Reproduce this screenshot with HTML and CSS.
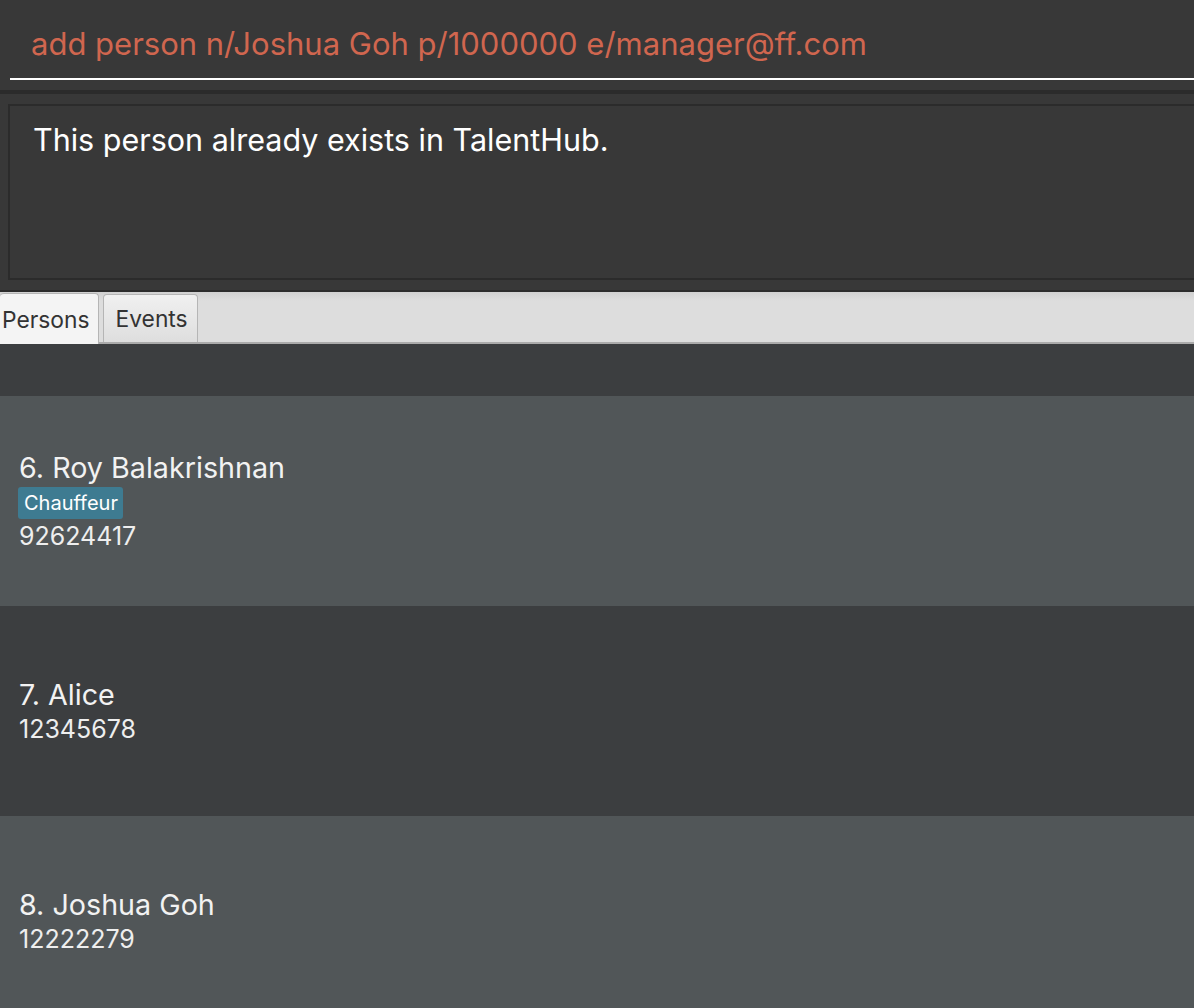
FILE: index.html
```html
<!DOCTYPE html>
<html>
<head>
<meta charset="utf-8">
<link rel="stylesheet" href="styles.css">
</head>
<body>
<div class="app">
  <div class="command-box">
    <div class="command-input">add person n/Joshua Goh p/1000000 e/manager@ff.com</div>
  </div>
  <div class="divider"></div>
  <div class="result-wrap">
    <div class="result-box">This person already exists in TalentHub.</div>
  </div>
  <div class="divider thin"></div>
  <div class="tabbar">
    <div class="tab active">Persons</div>
    <div class="tab">Events</div>
  </div>
  <div class="list">
    <div class="spacer"></div>
    <div class="card odd">
      <div class="name">6. Roy Balakrishnan</div>
      <div class="tags"><span class="tag">Chauffeur</span></div>
      <div class="phone">92624417</div>
    </div>
    <div class="card even">
      <div class="name">7. Alice</div>
      <div class="phone">12345678</div>
    </div>
    <div class="card odd">
      <div class="name">8. Joshua Goh</div>
      <div class="phone">12222279</div>
    </div>
  </div>
</div>
</body>
</html>
```
FILE: styles.css
```css
html, body {
  margin: 0;
  padding: 0;
  background: #383838;
  overflow: hidden;
}
.app {
  width: 1194px;
  height: 1008px;
  overflow: hidden;
  font-family: Inter, "Noto Sans", sans-serif;
}
.command-box {
  height: 90px;
  padding-left: 10px;
  box-sizing: border-box;
  background: #383838;
}
.command-input {
  height: 80px;
  box-sizing: border-box;
  border-bottom: 2px solid #ffffff;
  padding-left: 21px;
  padding-top: 24px;
  color: #d0664f;
  font-size: 31px;
  line-height: 40px;
  white-space: nowrap;
}
.divider {
  height: 4px;
  background: #2b2b2b;
}
.divider.thin {
  height: 2px;
}
.result-wrap {
  padding: 10px 0 10px 8px;
  background: #383838;
}
.result-box {
  height: 176px;
  box-sizing: border-box;
  margin-right: -10px;
  border: 2px solid #2b2b2b;
  padding: 14px 0 0 23px;
  color: #ffffff;
  font-size: 30.5px;
  line-height: 40px;
  white-space: nowrap;
}
.tabbar {
  height: 52px;
  box-sizing: border-box;
  background: linear-gradient(#d0d0d0 0px, #dddddd 9px, #dddddd 100%);
  border-bottom: 2px solid #ababab;
  display: flex;
  align-items: flex-end;
  gap: 4px;
}
.tab {
  height: 48px;
  box-sizing: border-box;
  border: 1px solid #b5b5b5;
  border-bottom: none;
  border-radius: 4px 4px 0 0;
  background: linear-gradient(#f0f0f0, #dedede);
  color: #333333;
  font-size: 22.8px;
  display: flex;
  align-items: center;
  padding: 0 9px 0 12px;
}
.tab.active {
  height: 51px;
  background: #f4f4f4;
  border-left: none;
  padding: 0 8px 0 2px;
  margin-bottom: -2px;
}
.list {
  background: #3c3e40;
}
.spacer {
  height: 52px;
}
.card {
  height: 210px;
  box-sizing: border-box;
  padding-left: 19px;
  display: flex;
  flex-direction: column;
  justify-content: center;
}
.card.odd {
  background: #515658;
}
.card.even {
  background: #3c3e40;
}
.name {
  color: #f2f2f2;
  font-size: 28.7px;
  line-height: 36px;
}
.tags {
  display: flex;
  margin: 1px 0 1px -1px;
}
.tag {
  background: #3e7b91;
  color: #ffffff;
  font-size: 20px;
  line-height: 32px;
  padding: 0 5px 0 6px;
  border-radius: 3px;
}
.phone {
  color: #eeeeee;
  font-size: 25px;
  line-height: 32px;
}
```
